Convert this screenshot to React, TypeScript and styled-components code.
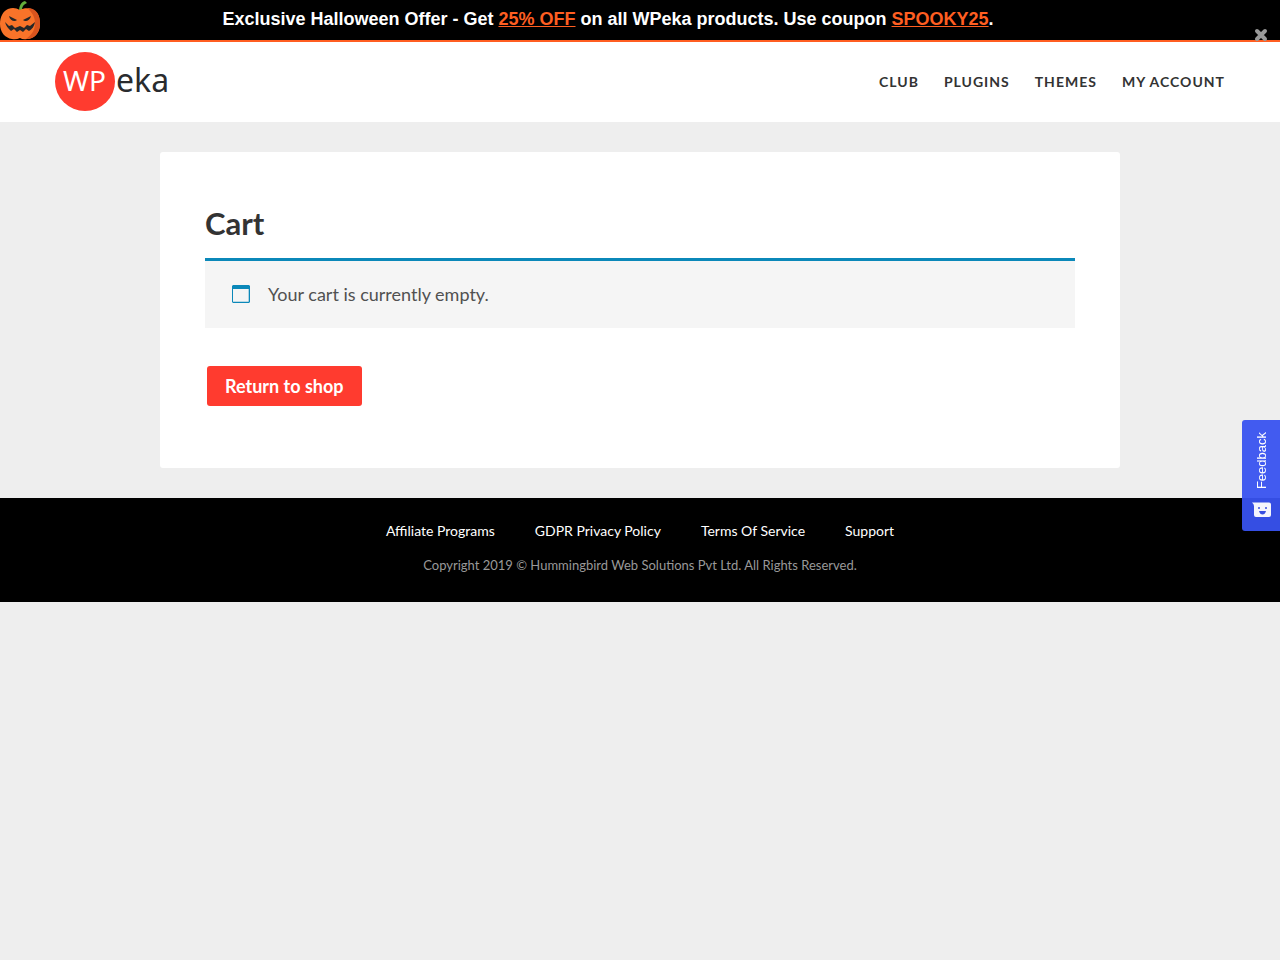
import React from "react";
import styled, { createGlobalStyle } from "styled-components";

const GlobalStyle = createGlobalStyle`
  *, *::before, *::after { box-sizing: border-box; }
  body {
    margin: 0;
    background: #eeeeee;
    color: #333333;
    font-family: Lato, "Open Sans", sans-serif;
    font-size: 18px;
    line-height: 30px;
  }
`;

const OfferBar = styled.aside`
  position: relative;
  display: flex;
  align-items: flex-start;
  background: #000000;
  border-bottom: 2px solid #ff5e21;
`;

const OfferText = styled.p`
  flex: 1;
  margin: 0;
  padding: 4px 104px 6px 0;
  color: #ffffff;
  font: bold 18px/30px "Liberation Sans", Arial, sans-serif;
  text-align: center;
`;

const OfferLink = styled.a`
  color: #ff5e21;
  text-decoration: underline;
`;

const OfferClose = styled.button`
  position: absolute;
  right: 12px;
  bottom: -2px;
  display: flex;
  padding: 0;
  border: 0;
  background: none;
  cursor: pointer;
`;

const Header = styled.header`
  display: flex;
  align-items: center;
  justify-content: space-between;
  min-height: 80px;
  padding: 0 55px;
  background: #ffffff;
`;

const LogoLink = styled.a`
  display: flex;
`;

const MainNav = styled.nav`
  display: flex;
  gap: 25px;
`;

const NavLink = styled.a`
  color: #333333;
  font-size: 14px;
  font-weight: 700;
  letter-spacing: 1px;
  text-decoration: none;
  text-transform: uppercase;
`;

const Card = styled.main`
  max-width: 960px;
  margin: 30px auto;
  padding: 51px 45px 62px;
  border-radius: 3px;
  background: #ffffff;
`;

const Title = styled.h1`
  margin: 0 0 15px;
  font-size: 31px;
  font-weight: 700;
  line-height: 40px;
`;

const Notice = styled.div`
  display: flex;
  align-items: center;
  gap: 18px;
  margin-bottom: 38px;
  padding: 18px 27px 19px;
  border-top: 3px solid #0b88b9;
  background: #f5f5f5;
  color: #515151;
`;

const NoticeIcon = styled.svg`
  flex: none;
`;

const ShopButton = styled.button`
  display: block;
  margin: 0 2px;
  padding: 5px 18px;
  border: 0;
  border-radius: 3px;
  background: #ff3b2f;
  color: #ffffff;
  font: inherit;
  font-weight: 700;
  cursor: pointer;
`;

const Footer = styled.footer`
  display: flex;
  flex-direction: column;
  align-items: center;
  gap: 4px;
  padding: 18px 20px 22px;
  background: #000000;
`;

const FooterNav = styled.nav`
  display: flex;
  flex-wrap: wrap;
  justify-content: center;
  gap: 0 40px;
`;

const FooterLink = styled.a`
  color: #ffffff;
  font-size: 14px;
  text-decoration: none;
`;

const Copyright = styled.p`
  margin: 0;
  color: #999999;
  font-size: 13px;
`;

const FeedbackTab = styled.button`
  position: fixed;
  top: 420px;
  right: 0;
  display: flex;
  flex-direction: column;
  align-items: center;
  gap: 13px;
  padding: 12px 9px 13px 10px;
  border: 0;
  border-radius: 3px 0 0 3px;
  background: rgba(56, 82, 239, 0.95);
  color: #ffffff;
  font: 13px/19px "Liberation Sans", Arial, sans-serif;
  cursor: pointer;
`;

const FeedbackLabel = styled.span`
  writing-mode: vertical-rl;
  transform: rotate(180deg);
`;

const PumpkinIcon = () => (
  <svg width="40" height="40" viewBox="0 0 40 40" aria-hidden="true">
    <path d="M19 11C19 6 21 2 25 1L27 3C23 5 22 7 22 11Z" fill="#62ad3b" />
    <path d="M20 10C25 7 31 8 35 11C39 14 40 19 40 24C40 33 34 39 27 39Q23 40 20 38Q16 40 12 39C5 38 0 32 0 24C0 17 3 11 8 9C13 7 16 8 20 10Z" fill="#f97329" />
    <path d="M27 8C37 8 40 15 40 24C40 33 34 39 26 39C33 34 35 29 35 23C35 17 32 12 27 8Z" fill="#d9541e" />
    <path d="M9 16L17 20C15 22 10 21 9 16ZM31 16L23 20C25 22 30 21 31 16Z" fill="#252628" />
    <path d="M5 22L9 26L12 25L15 28L20 26L24 28L27 25L30 26L35 22C34 27 32 29 29 31L26 29L23 32L20 30L17 32L14 29L11 31C8 28 6 26 5 22Z" fill="#252628" />
  </svg>
);

const Logo = () => (
  <svg width="116" height="60" viewBox="0 0 116 60" role="img" aria-label="WPeka">
    <ellipse cx="30" cy="29.5" rx="30" ry="29.5" fill="#ff3b2f" />
    <text x="8" y="39" fill="#ffffff" fontFamily="Noto Sans, Open Sans, sans-serif" fontSize="28">WP</text>
    <text x="61" y="40" fill="#292b2e" fontFamily="Noto Sans, Open Sans, sans-serif" fontSize="32">eka</text>
  </svg>
);

const navItems = ["Club", "Plugins", "Themes", "My Account"];
const footerItems = ["Affiliate Programs", "GDPR Privacy Policy", "Terms Of Service", "Support"];

export default function App() {
  return (
    <>
      <GlobalStyle />
      <OfferBar>
        <PumpkinIcon />
        <OfferText>
          Exclusive Halloween Offer - Get <OfferLink href="#offer">25% OFF</OfferLink> on all WPeka
          products. Use coupon <OfferLink href="#coupon">SPOOKY25</OfferLink>.
        </OfferText>
        <OfferClose type="button" aria-label="Close offer">
          <svg width="14" height="14" viewBox="0 0 14 14" aria-hidden="true">
            <path d="M3 3L11 11M11 3L3 11" stroke="#999999" strokeWidth="4" strokeLinecap="round" />
          </svg>
        </OfferClose>
      </OfferBar>
      <Header>
        <LogoLink href="#home">
          <Logo />
        </LogoLink>
        <MainNav aria-label="Main">
          {navItems.map((item) => (
            <NavLink key={item} href="#">{item}</NavLink>
          ))}
        </MainNav>
      </Header>
      <Card>
        <Title>Cart</Title>
        <Notice role="status">
          <NoticeIcon width="18" height="18" viewBox="0 0 18 18" aria-hidden="true">
            <path d="M1 0H17L18 1V17L17 18H1L0 17V1ZM1 4V16.700H16.700V4Z" fill="#0b88b9" fillRule="evenodd" />
          </NoticeIcon>
          Your cart is currently empty.
        </Notice>
        <ShopButton type="button">Return to shop</ShopButton>
      </Card>
      <Footer>
        <FooterNav aria-label="Footer">
          {footerItems.map((item) => (
            <FooterLink key={item} href="#">{item}</FooterLink>
          ))}
        </FooterNav>
        <Copyright>Copyright 2019 © Hummingbird Web Solutions Pvt Ltd. All Rights Reserved.</Copyright>
      </Footer>
      <FeedbackTab type="button">
        <FeedbackLabel>Feedback</FeedbackLabel>
        <svg width="19" height="16" viewBox="0 0 19 16" aria-hidden="true">
          <path d="M0 0.500H17Q19 0.500 19 2.500V13Q19 15 17 15H4Q2 15 2 13V4Q2 2 0 0.500Z" fill="#f4f5fc" />
          <path d="M7 5V7M14 5V7" stroke="#384fe0" strokeWidth="1.5" />
          <path d="M7 9H14Q13 12.500 10.500 12.500T7 9Z" fill="#384fe0" />
        </svg>
      </FeedbackTab>
    </>
  );
}
